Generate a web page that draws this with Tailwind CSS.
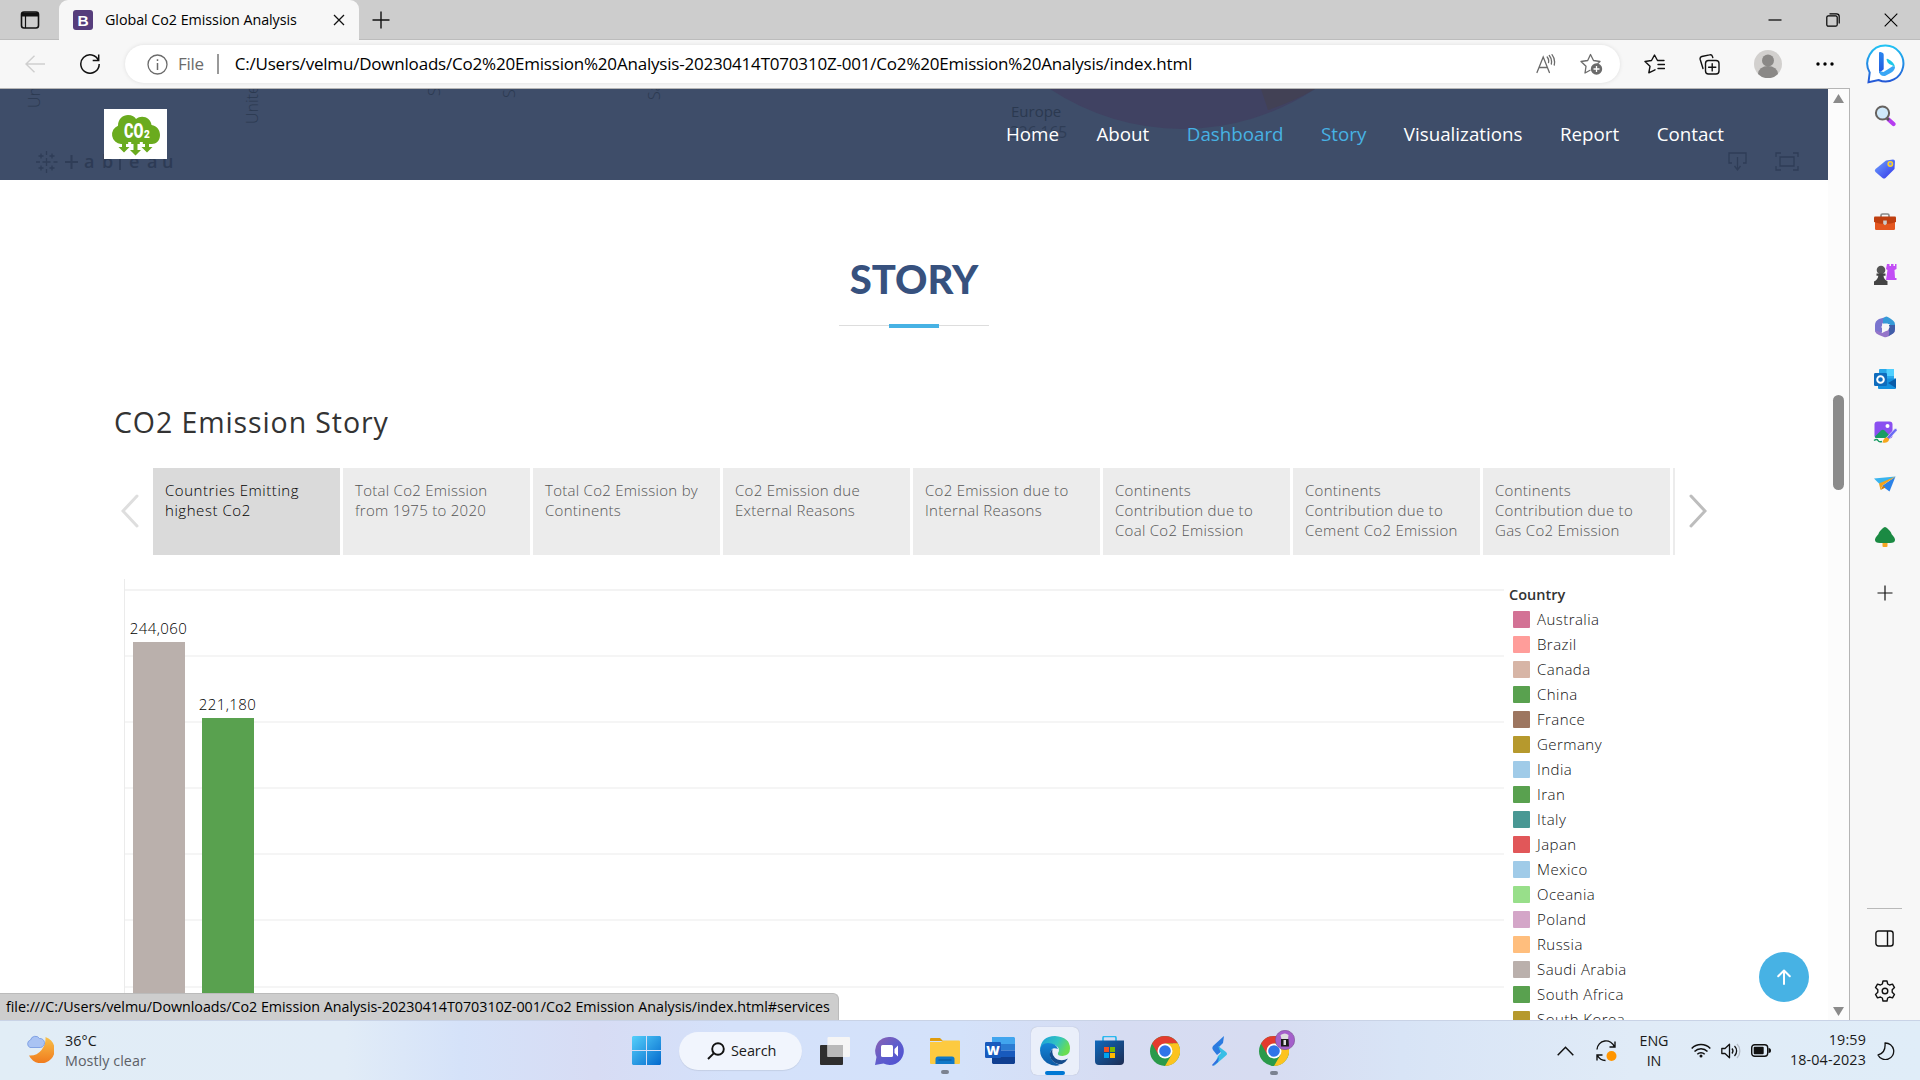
<!DOCTYPE html>
<html lang="en">
<head>
<meta charset="utf-8">
<title>Global Co2 Emission Analysis</title>
<script src="https://cdn.jsdelivr.net/npm/@tailwindcss/browser@4"></script>
</head>
<body class="w-[1920px] h-[1080px] overflow-hidden bg-white flex flex-col font-['Open_Sans',sans-serif] text-black">

<!-- tab strip -->
<header class="h-10 shrink-0 bg-[#cdcdcd] flex items-center border-b border-[#bcbcbc]">
  <div class="w-[59px] h-full flex items-center justify-center">
    <svg class="w-[20px] h-[20px]" viewBox="0 0 20 20" fill="none" stroke="#111" stroke-width="1.6"><rect x="1.5" y="2" width="17" height="16" rx="2.5"/><path d="M2 4.500h16" stroke-width="4"/><path d="M5.500 6v12" stroke-width="1.200"/></svg>
  </div>
  <div class="w-[300px] h-10 -mb-px bg-[#f7f7f7] rounded-t-[9px] flex items-center pl-[14px] pr-[14px] z-10">
    <svg class="w-5 h-5 shrink-0" viewBox="0 0 20 20"><rect width="20" height="20" rx="3" fill="#563d7c"/><text x="4.600" y="15.500" font-family="Liberation Sans" font-weight="700" font-size="15.500" fill="#fff">B</text></svg>
    <span class="ml-3 text-[14.3px] tracking-[-0.04px] whitespace-nowrap">Global Co2 Emission Analysis</span>
    <svg class="w-3 h-3 ml-auto" viewBox="0 0 12 12" stroke="#111" stroke-width="1.300"><path d="M1 1l10 10M11 1L1 11"/></svg>
  </div>
  <svg class="w-[18px] h-[18px] ml-[13px]" viewBox="0 0 18 18" stroke="#111" stroke-width="1.400"><path d="M9 .5v17M.5 9h17"/></svg>
  <div class="ml-auto flex items-center gap-11 pr-[22px]">
    <svg class="w-[14px] h-[14px]" viewBox="0 0 14 14" stroke="#000" stroke-width="1.200"><path d="M.5 7h13"/></svg>
    <svg class="w-[14px] h-[14px]" viewBox="0 0 14 14" fill="none" stroke="#000" stroke-width="1.200"><rect x=".8" y="2.800" width="10.400" height="10.400" rx="1.500"/><path d="M3.500.8h7a2.700 2.700 0 0 1 2.700 2.700v7"/></svg>
    <svg class="w-[14px] h-[14px]" viewBox="0 0 14 14" stroke="#000" stroke-width="1.100"><path d="M.7.700l12.600 12.600M13.300.700L.7 13.300"/></svg>
  </div>
</header>

<!-- toolbar -->
<div class="h-12 shrink-0 bg-[#f7f7f7] flex items-center">
  <svg class="w-5 h-[18px] ml-[25px]" viewBox="0 0 20 18" fill="none" stroke="#cfcfcf" stroke-width="1.400"><path d="M20 9H1M9.500.7L1 9l8.500 8.300"/></svg>
  <svg class="w-5 h-5 ml-[35px]" viewBox="0 0 20 20" fill="none" stroke="#111" stroke-width="1.500"><path d="M18.500 6.500A9.200 9.200 0 1 0 19.200 10M18.700.5v6h-6"/></svg>
  <div class="w-[1495px] h-[38px] ml-[25px] rounded-full bg-white shadow-[0_0_4px_rgba(0,0,0,0.1)] flex items-center pl-[22px] pr-[17px]">
    <svg class="w-[21px] h-[21px]" viewBox="0 0 21 21" fill="none" stroke="#6b6b6b" stroke-width="1.300"><circle cx="10.500" cy="10.500" r="9.500"/><path d="M10.500 9v7M10.500 5.200v1.800" stroke-width="1.500"/></svg>
    <span class="ml-[10px] text-[17px] tracking-[-0.3px] text-[#6b6b6b]">File</span>
    <span class="w-[2px] h-5 bg-[#999] ml-[13px]"></span>
    <span class="ml-4 text-[17px] tracking-[-0.2px] whitespace-nowrap">C:/Users/velmu/Downloads/Co2%20Emission%20Analysis-20230414T070310Z-001/Co2%20Emission%20Analysis/index.html</span>
    <svg class="w-5 h-5 ml-auto" viewBox="0 0 20 20" fill="none" stroke="#6b6b6b" stroke-width="1.300" stroke-linecap="round"><path d="M1 18.500L7.200 3l6.200 15.500M3 13.500h8.400"/><path d="M11.200 3a6.500 6.500 0 0 1 1.300 5.500M13.300 1.500a10 10 0 0 1 2 8.500M16 .7a12 12 0 0 1 2.200 10.300"/></svg>
    <svg class="w-[23px] h-[22px] ml-[24px]" viewBox="0 0 23 22" fill="none" stroke="#6b6b6b" stroke-width="1.300" stroke-linejoin="round"><path d="M10.500 17l-5.500 3 1-6.700L1 8.500l6.700-1L10.500 1.500l3 6 6.500 1-2.500 2.300"/><circle cx="16.500" cy="16" r="5.700" fill="#6b6b6b" stroke="none"/><path d="M16.500 13v6M13.500 16h6" stroke="#fff"/></svg>
  </div>
  <svg class="w-[21px] h-[20px] ml-[24px]" viewBox="0 0 21 20" fill="none" stroke="#111" stroke-width="1.400" stroke-linejoin="round" stroke-linecap="round"><path d="M11 15.800l-6.200 3 1.200-6.500L1 7.500l6.500-1L10.500 1l3 5.500h6.500M14 10.500h6.500M14 14.500h6.500"/></svg>
  <svg class="w-[21px] h-[21px] ml-[34px]" viewBox="0 0 21 21" fill="none" stroke="#111" stroke-width="1.400" stroke-linecap="round"><rect x="6.500" y="6.500" width="13.500" height="13.500" rx="3"/><path d="M13.200 9.700v7.200M9.600 13.300h7.200M4 14.500L1.200 5.500a2.500 2.500 0 0 1 1.600-3L10.500.9a2.500 2.500 0 0 1 3 1.700l.3 1"/></svg>
  <svg class="w-7 h-7 ml-[34px]" viewBox="0 0 28 28"><circle cx="14" cy="14" r="14" fill="#d2d0ce"/><circle cx="14" cy="10.500" r="6" fill="#8a8886"/><path d="M4 24a10 8 0 0 1 20 0 14 14 0 0 1-20 0z" fill="#8a8886"/></svg>
  <svg class="w-[18px] h-1 ml-[34px]" viewBox="0 0 18 4"><circle cx="2" cy="2" r="1.700"/><circle cx="9" cy="2" r="1.700"/><circle cx="16" cy="2" r="1.700"/></svg>
  <svg class="w-[39px] h-[40px] ml-[32px]" viewBox="0 0 39 40"><defs><linearGradient id="bg1" x1="0" y1="0" x2="0" y2="1"><stop offset="0" stop-color="#22c3f3"/><stop offset="1" stop-color="#2457d6"/></linearGradient><linearGradient id="bg2" x1="0" y1="0" x2="0" y2="1"><stop offset="0" stop-color="#2a86f0"/><stop offset="1" stop-color="#2257dd"/></linearGradient></defs><path d="M19.500 1.500a17.800 18 0 1 1-7 34.500l-10 2.200 1.200-9.700A18 18 0 0 1 19.500 1.500z" fill="#fff" stroke="url(#bg1)" stroke-width="2"/><path d="M13 9q0-1.500 1.500-1l2 .8q1.200.5 1.200 2v14.500l-4.700 4z" fill="url(#bg2)"/><path d="M13 27q.5 5.500 6 5l6-3.200q4-2.500 4-5.800l-2-1-5.500 3.500-4 2.500z" fill="#3aa7f5"/><path d="M20.500 15.500q0-1 1.500-.5 6.500 3 7 8.500-.7-1.500-3-2.200-3.500-1-4.500-3z" fill="#1fc8e8"/></svg>
</div>

<!-- page and side panel -->
<div class="h-[932px] shrink-0 flex relative">
  <main class="w-[1828px] h-full overflow-hidden border-t border-[#b5b5b5] flex flex-col">

    <nav class="h-[91px] shrink-0 bg-[#3e4d69] relative flex items-center text-[18.75px] text-white">
      <!-- dashboard faintly visible through the translucent header -->
      <svg class="absolute inset-0 w-[1828px] h-[91px]" viewBox="0 0 1828 91" fill="#2b3950" font-family="Open Sans" font-size="16">
        <path d="M1050 0a240 240 0 0 0 265 0z" fill="#404262"/><path d="M1261 0l7 21a240 240 0 0 0 47-21z" fill="#424155"/>
        <text x="1011" y="28" font-size="15" font-weight="500">Europe</text><text x="1010" y="49" font-size="15.500" fill="#2f3d56">326,165</text>
        <g font-weight="300"><text transform="translate(40 19) rotate(-90)">United</text><text transform="translate(258 35) rotate(-90)">United</text><text transform="translate(440 7) rotate(-90)">S</text><text transform="translate(515 9) rotate(-90)">S</text><text transform="translate(660 11) rotate(-90)">Sa</text></g>
        <g stroke="#2f3d57" stroke-width="1.300" fill="none"><path d="M46.500 69v8M42.500 73h8M41 64.500v5M38.500 67h5M52 64.500v5M49.500 67h5M41 76.500v5M38.500 79h5M52 76.500v5M49.500 79h5M36 73h4M53.500 73h4M46.500 62v4M46.500 80v4"/><path d="M1732 74h-3V64h17v10h-3M1737.500 68v13M1734.500 77l3 4 3-4M1776 68v-4h5M1793 64h5v4M1798 77v4h-5M1781 81h-5v-4M1780 68h14v9h-14z"/><path d="M71.500 66v14M65 73h13M120 65v16" stroke-width="2"/></g>
        <text x="84 102 129 147 162" y="79" font-size="18" font-weight="600" fill="#2d3b55">abeau</text>
      </svg>
      <svg class="relative w-[63px] h-[50px] ml-[104px] mb-[2px]" viewBox="0 0 63 50"><path fill="#fff" d="M0 0h63v50H0z"/><path d="M17 35a9.500 9.500 0 0 1-3-18.300C14 10 19 6 24 6c4 0 7 2 8 4 6-5 15-1 15.500 6C53 17 56 21 56 26c0 6-4 9-8 9z" fill="#6aab1e"/><path d="M18 33h4v5h3.500L20 43.500 14.500 38H18zM29.500 33h4v8H37l-5.500 5.500L26 41h3.500zM41 33h4v5h3.500L43 43.500 37.500 38H41z" fill="#6aab1e"/><path d="M25.700 33v5M37.300 33v5" stroke="#fff" stroke-width="3"/><text transform="translate(20 29) scale(.72 1)" font-family="Roboto" font-weight="900" font-size="20" fill="#fff">CO</text><text x="40" y="29" font-family="Roboto" font-weight="900" font-size="10" fill="#fff">2</text></svg>
      <div class="relative ml-auto mr-[104px] flex gap-[37.5px] font-medium">
        <a>Home</a><a>About</a><a class="text-[#47b2e4]">Dashboard</a><a class="text-[#47b2e4]">Story</a><a>Visualizations</a><a>Report</a><a>Contact</a>
      </div>
    </nav>

    <section class="flex flex-col items-center pt-[75px]">
      <h2 class="text-[40px] leading-[48px] font-black font-['Lato',sans-serif] text-[#37517e]">STORY</h2>
      <div class="mt-[21px] w-[150px] h-1 flex items-start"><span class="flex-1 h-px mt-px bg-[#ddd]"></span><span class="w-[50px] h-1 bg-[#47b2e4]"></span><span class="flex-1 h-px mt-px bg-[#ddd]"></span></div>
    </section>

    <section class="pl-[115px] pt-[74px]">
      <h3 class="-ml-px text-[28.5px] leading-10 font-normal text-[#333] tracking-[0.9px] whitespace-nowrap">CO2 Emission Story</h3>
      <div class="mt-[26px] flex items-center text-[15px] leading-5 font-light text-[#555] tracking-[0.28px] whitespace-nowrap">
        <svg class="w-[18px] h-[34px] ml-[6px] mr-[14px] mb-[2px]" viewBox="0 0 18 34" fill="none" stroke="#dedede" stroke-width="3" stroke-linecap="round"><path d="M16 2L2 17l14 15"/></svg>
        <div class="flex gap-[3px] h-[87px]">
          <div class="w-[187px] bg-[#dadada] text-black tracking-[0.55px] pl-3 pt-3">Countries Emitting<br>highest Co2</div>
          <div class="w-[187px] bg-[#ececec] pl-3 pt-3">Total Co2 Emission<br>from 1975 to 2020</div>
          <div class="w-[187px] bg-[#ececec] pl-3 pt-3">Total Co2 Emission by<br>Continents</div>
          <div class="w-[187px] bg-[#ececec] pl-3 pt-3">Co2 Emission due<br>External Reasons</div>
          <div class="w-[187px] bg-[#ececec] pl-3 pt-3">Co2 Emission due to<br>Internal Reasons</div>
          <div class="w-[187px] bg-[#ececec] pl-3 pt-3">Continents<br>Contribution due to<br>Coal Co2 Emission</div>
          <div class="w-[187px] bg-[#ececec] pl-3 pt-3">Continents<br>Contribution due to<br>Cement Co2 Emission</div>
          <div class="w-[187px] bg-[#ececec] pl-3 pt-3">Continents<br>Contribution due to<br>Gas Co2 Emission</div>
          <div class="w-[2px] bg-[#ececec]"></div>
        </div>
        <svg class="w-[18px] h-[34px] ml-[14px] mb-[2px]" viewBox="0 0 18 34" fill="none" stroke="#bdbdbd" stroke-width="3" stroke-linecap="round"><path d="M2 2l14 15L2 32"/></svg>
      </div>

      <div class="mt-6 ml-[9px] flex h-[460px]">
        <div class="relative w-[1380px] border-l border-[#ebebeb] pt-[9.500px]">
          <div class="h-[66.200px] border-t-2 border-[#f3f3f3]"></div>
          <div class="h-[66.200px] border-t-2 border-[#f5f5f5]"></div>
          <div class="h-[66.200px] border-t-2 border-[#f5f5f5]"></div>
          <div class="h-[66.200px] border-t-2 border-[#f5f5f5]"></div>
          <div class="h-[66.200px] border-t-2 border-[#f5f5f5]"></div>
          <div class="h-[66.200px] border-t-2 border-[#f5f5f5]"></div>
          <div class="h-[66.200px] border-t-2 border-[#f5f5f5]"></div>
          <div class="absolute inset-0 flex items-end gap-2 pl-[3px] text-[15px] leading-6 tracking-[0.45px] text-black font-normal">
            <div class="w-[61px] flex flex-col items-center"><span class="font-light">244,060</span><span class="w-[52px] mt-[2px] bg-[#bab0ac]" style="height:397.5px"></span></div>
            <div class="w-[61px] flex flex-col items-center"><span class="font-light">221,180</span><span class="w-[52px] mt-[2px] bg-[#59a14f]" style="height:321.5px"></span></div>
          </div>
        </div>
        <div class="pl-[5px] pt-[3px] text-[15px] text-[#111] font-light tracking-[0.45px] whitespace-nowrap">
          <div class="h-[25px] leading-[25px] font-semibold text-[14.500px] text-[#333] tracking-normal">Country</div>
          <ul class="pl-1 leading-[25px] [&_li]:flex [&_li]:items-center [&_li]:gap-[7px] [&_i]:w-[17px] [&_i]:h-[17px] [&_i]:rounded-[1px]">
            <li><i class="bg-[#d37295]"></i>Australia</li>
            <li><i class="bg-[#ff9d9a]"></i>Brazil</li>
            <li><i class="bg-[#d7b5a6]"></i>Canada</li>
            <li><i class="bg-[#59a14f]"></i>China</li>
            <li><i class="bg-[#9d7660]"></i>France</li>
            <li><i class="bg-[#b6992d]"></i>Germany</li>
            <li><i class="bg-[#a0cbe8]"></i>India</li>
            <li><i class="bg-[#59a14f]"></i>Iran</li>
            <li><i class="bg-[#499894]"></i>Italy</li>
            <li><i class="bg-[#e15759]"></i>Japan</li>
            <li><i class="bg-[#a0cbe8]"></i>Mexico</li>
            <li><i class="bg-[#98df8a]"></i>Oceania</li>
            <li><i class="bg-[#d4a6c8]"></i>Poland</li>
            <li><i class="bg-[#ffbe7d]"></i>Russia</li>
            <li><i class="bg-[#bab0ac]"></i>Saudi Arabia</li>
            <li><i class="bg-[#59a14f]"></i>South Africa</li>
            <li><i class="bg-[#b6992d]"></i>South Korea</li>
          </ul>
        </div>
      </div>
    </section>
  </main>

  <!-- back to top -->
  <div class="absolute left-[1759px] top-[864px] w-[50px] h-[50px] rounded-full bg-[#47b2e4] flex items-center justify-center">
    <svg class="w-[14px] h-4" viewBox="0 0 14 16" fill="none" stroke="#fff" stroke-width="2" stroke-linecap="round" stroke-linejoin="round"><path d="M7 15V1.500M1.200 7.200L7 1.500l5.800 5.700"/></svg>
  </div>

  <!-- link status -->
  <div class="absolute left-0 bottom-0 w-[839px] h-[27px] bg-[#cdcdcd] border-t border-r border-[#bbb] rounded-tr-md pl-[6px] flex items-center text-[14.300px] tracking-[-0.03px] whitespace-nowrap">file:///C:/Users/velmu/Downloads/Co2 Emission Analysis-20230414T070310Z-001/Co2 Emission Analysis/index.html#services</div>

  <!-- scrollbar -->
  <div class="w-[22px] bg-[#fcfcfc] border-t border-r border-[#b5b5b5] flex flex-col items-center pt-[5px] pb-[4px]">
    <svg class="w-[11px] h-[9px]" viewBox="0 0 11 9"><path d="M5.500 0L11 9H0z" fill="#8b8b8b"/></svg>
    <div class="mt-[292px] w-[11px] h-[95px] rounded-full bg-[#8b8b8b]"></div>
    <svg class="w-[11px] h-[9px] mt-auto" viewBox="0 0 11 9"><path d="M5.500 9L11 0H0z" fill="#8b8b8b"/></svg>
  </div>

  <!-- side panel -->
  <aside class="w-[70px] bg-[#f7f7f7] flex flex-col items-center pt-[2px] pr-px [&>div]:h-[52.600px] [&>div]:flex [&>div]:items-center [&_svg]:block">
    <div><svg class="w-[22px] h-[22px]" viewBox="0 0 22 22"><path d="M14.500 14.500l5 4.500" stroke="#b63df0" stroke-width="4.200" stroke-linecap="round"/><path d="M12 12.500l3 2.500" stroke="#555" stroke-width="2.500"/><circle cx="8.500" cy="8" r="6.600" fill="#cfe9fb" stroke="#66625f" stroke-width="2"/></svg></div>
    <div><svg class="w-[22px] h-[22px]" viewBox="0 0 22 22"><defs><linearGradient id="tg" x1="0" y1="0" x2="1" y2="1"><stop offset="0" stop-color="#6ea4ff"/><stop offset="1" stop-color="#3434e8"/></linearGradient></defs><path d="M12 2.500L19 1.500Q21 1.500 21 3.500L20.500 11l-9 9q-1.500 1-3 0L1.500 14q-1.500-1.500 0-3z" fill="url(#tg)"/><circle cx="16.300" cy="6" r="2.200" fill="#6f8fff" stroke="#ffd21f" stroke-width="1.500"/></svg></div>
    <div><svg class="w-[24px] h-[20px] mt-[2px]" viewBox="0 0 24 20"><path d="M8 5V3.500Q8 2 9.500 2h5Q16 2 16 3.500V5" fill="none" stroke="#888" stroke-width="1.700"/><rect x="2" y="9" width="20" height="9" rx="1.200" fill="#e4561f"/><path d="M1 5.500Q1 4.500 2 4.500h20q1 0 1 1V10q-5 2-11 2T1 10z" fill="#bf3f10"/><path d="M10.200 8.500h3.600v3.300l-1.800 1.500-1.800-1.500z" fill="#ccc"/></svg></div>
    <div><svg class="w-[24px] h-[24px]" viewBox="0 0 24 24"><path d="M14 2h2.500v2H18V2h2.500v2H22V2h1.500v5L21.500 8l.5 8h1.500v2H13l1.500-10L13 7z" fill="#c24df5"/><circle cx="8" cy="8" r="4.300" fill="#555"/><path d="M3.500 11.500h9v2.200h-2q.3 3.800 4 5.500V23H1v-3.500q4-2 4.300-5.800H3.500z" fill="#444"/></svg></div>
    <div><svg class="w-[22px] h-[22px]" viewBox="0 0 22 22"><path d="M12 1L5 3Q1 5 1 9v5q0 3 3 4l4-1.500V9q0-2 2-3z" fill="#7a75cf"/><path d="M9 2.500L12 .5q2 0 7 4 2 1.500 2 4V13l-6-5H9z" fill="#369bd8"/><path d="M1 14q1 4 4 5l5 2q2 .7 4-.5l5-3q2-1.500 2-4V10l-6 1-1 3-6 3z" fill="#9575c9"/><path d="M21 9v4q0 3-2 4.500L14 20.500q2-2 1-6V9z" fill="#405ea8"/><path d="M9.300 7.500h4.400l2 3.500-2 3.500H9.300l-2-3.500z" fill="#f7f7f7"/></svg></div>
    <div><svg class="w-[22px] h-[22px]" viewBox="0 0 22 22"><rect x="5" y="1" width="15" height="14" rx="1" fill="#28a8ea"/><path d="M12.500 1H20v7h-7.500z" fill="#50d0ff"/><path d="M4 10.500h18V20q0 1-1 1H5q-1 0-1-1z" fill="#1490df"/><path d="M22 10.500V20l-8-5z" fill="#0a5ba8"/><rect x="0" y="5" width="13" height="13" rx="1.200" fill="#0f6cbd"/><circle cx="6.500" cy="11.500" r="3.300" fill="none" stroke="#fff" stroke-width="2"/></svg></div>
    <div><svg class="w-[24px] h-[24px]" viewBox="0 0 24 24"><rect x="1.500" y="1.500" width="18" height="17" rx="3" fill="#8a4ff0"/><circle cx="14.500" cy="6" r="2" fill="#fff"/><path d="M2 16.500l6-6q1.800-1.500 3.600 0L18 17q-1 1.500-3 1.500H5q-3 0-3-2z" fill="#179c63"/><path d="M1 18h13v6H1z" fill="#f7f7f7"/><path d="M13 18L22 8.500q2.500-.5 2 2L15.500 20z" fill="#6a6af5" stroke="#f7f7f7" stroke-width=".6"/><path d="M9.500 22.500q1.500-5.500 4.500-5 3 1 1.500 3.500-1.500 2.500-6 1.500z" fill="#f6a71c"/><path d="M1 20.500q3-2 4 0t4 1" fill="none" stroke="#179c63" stroke-width="1.500"/></svg></div>
    <div><svg class="w-[22px] h-[18px]" viewBox="0 0 22 18"><path d="M0 3.500L21.500 1.500 6.500 10z" fill="#39b4ee"/><path d="M21.500 1.500L15.500 16.500 8 11z" fill="#2b82e8"/><path d="M21.500 1.500L5 8.500 6.500 15l2-4.500z" fill="#f3a31c"/><path d="M6.500 15L9 10.800l2.500 1.700z" fill="#c97b0c"/></svg></div>
    <div><svg class="w-[22px] h-[22px]" viewBox="0 0 22 22"><rect x="8.500" y="15" width="5" height="6" rx="1" fill="#f5a623"/><path d="M11 1q1.200 0 2.500 1.500 4 3.500 4 5.500 3.800 4 3.500 6 0 3-5 3H6q-5 0-5-3-.3-2 3.500-6 0-2 4-5.500Q9.800 1 11 1z" fill="#1b8a43"/></svg></div>
    <svg class="w-4 h-4 mt-[22px]" viewBox="0 0 16 16" stroke="#111" stroke-width="1.200"><path d="M8 .5v15M.5 8h15"/></svg>
    <span class="w-[35px] h-px bg-[#b9b9b9] mt-auto"></span>
    <svg class="w-[19px] h-[17px] mt-[21px]" viewBox="0 0 19 17" fill="none" stroke="#111" stroke-width="1.400"><rect x=".9" y="1" width="17.200" height="15" rx="2.500"/><path d="M12.500 1v15"/></svg>
    <svg class="w-[22px] h-[22px] mt-[33px] mb-[18px]" viewBox="0 0 22 22" fill="none" stroke="#111" stroke-width="1.400" stroke-linejoin="round"><circle cx="11" cy="11" r="2.800"/><path d="M9 1h4l.7 3 1.800 1 3-.9 2 3.500-2.300 2.200v2.400l2.300 2.200-2 3.500-3-.9-1.800 1L13 21H9l-.7-3-1.800-1-3 .9-2-3.500 2.300-2.200V9.800L1.500 7.600l2-3.500 3 .9 1.800-1z"/></svg>
  </aside>
</div>

<!-- taskbar -->
<footer class="h-[60px] shrink-0 border-t border-[#c9d3e6] bg-[linear-gradient(90deg,#e1edf6_0%,#e1ecf7_18%,#d5e2f9_24%,#d7dcf4_31%,#d4e1fa_38%,#d4e2fa_50%,#d6dcf2_58%,#d7dcf1_66%,#d8e4f6_73%,#e0ebf7_85%,#e0edf8_100%)] flex items-center text-[#1a1a1a]">
  <div class="w-[632px] pl-[26px] flex items-center gap-[11px]">
    <svg class="w-7 h-7 mb-[3px]" viewBox="0 0 28 28"><defs><linearGradient id="mn" x1="0" y1="0" x2="0" y2="1"><stop offset="0" stop-color="#f8c14a"/><stop offset="1" stop-color="#f07b1d"/></linearGradient></defs><path d="M19.500 2A13.500 13.500 0 1 1 3 20.500Q11 21 15.500 15T19.500 2z" fill="url(#mn)"/><path d="M4 12.500a4 4 0 0 1 .5-7.500 5 5 0 0 1 9-1.500 4.500 4.500 0 0 1 1 9z" fill="#a9c3f3" stroke="#7195e0" stroke-width=".8"/></svg>
    <div class="text-[14.300px] leading-5 tracking-[0.06px]"><div>36°C</div><div class="text-[#5c6066]">Mostly clear</div></div>
  </div>
  <svg class="w-[29px] h-[29px]" viewBox="0 0 29 29"><defs><linearGradient id="wn" x1="0" y1="0" x2="1" y2="1"><stop offset="0" stop-color="#55d0fb"/><stop offset="1" stop-color="#0369cd"/></linearGradient></defs><path d="M1 0h13v14H0V1zM15 0h13l1 1v13H15zM0 15h14v14H1l-1-1zM15 15h14v13l-1 1H15z" fill="url(#wn)"/></svg>
  <div class="ml-[18px] w-[123px] h-[38px] rounded-full bg-[#f1f5fd] shadow-[0_1px_1px_rgba(0,0,0,0.08)] flex items-center pl-[28px]">
    <svg class="w-[18px] h-[18px]" viewBox="0 0 18 18" fill="none" stroke="#111" stroke-width="1.900"><circle cx="11" cy="7" r="5.800"/><path d="M6.700 11.300L1 17"/></svg>
    <span class="ml-[6px] text-[14.500px] tracking-[-0.1px]">Search</span>
  </div>
  <svg class="w-[30px] h-[28px] ml-[18px]" viewBox="0 0 30 28"><rect y="8" width="23" height="20" rx="1" fill="#2e2e2e"/><rect x="7.500" width="22.500" height="20" rx="1" fill="#f5f5f5"/><path d="M7.500 8H23v12H7.500z" fill="#b9b9b9"/></svg>
  <svg class="w-[29px] h-[28px] ml-[25px]" viewBox="0 0 29 28"><defs><linearGradient id="ch" x1="0" y1="0" x2="1" y2="1"><stop offset="0" stop-color="#8e62b0"/><stop offset=".5" stop-color="#5f5dcc"/><stop offset="1" stop-color="#4c50d4"/></linearGradient></defs><path d="M14.500 0a14 14 0 1 1-6 26.500L0 28l1.500-8A14 14 0 0 1 14.500 0z" fill="url(#ch)"/><rect x="6" y="8" width="12" height="12" rx="1.500" fill="#fff"/><path d="M19.500 12l3.500-3.500v11L19.500 16z" fill="#fff"/></svg>
  <div class="ml-[26px] relative"><svg class="w-[30px] h-[27px]" viewBox="0 0 30 27"><path d="M0 2Q0 1 1 1h9l3 3H0z" fill="#e09c0d"/><path d="M0 5h11l2-1.500h16q1 0 1 1V26q0 1-1 1H1q-1 0-1-1z" fill="#fdca40"/><path d="M5.500 27v-5q0-2.500 2.500-2.500h14q2.500 0 2.500 2.500v5z" fill="#0f78c8"/><path d="M8.500 23h13" stroke="#0a5290"/></svg><span class="absolute left-[11px] top-[33px] w-2 h-1 rounded-full bg-[#7b8290]"></span></div>
  <svg class="w-[30px] h-[27px] ml-[25px]" viewBox="0 0 30 27"><path d="M7 0h22l1 1v6H7z" fill="#41a5ee"/><path d="M7 7h23v6.500H7z" fill="#2b7cd3"/><path d="M7 13.500h23V20H7z" fill="#185abd"/><path d="M7 20h23v6l-1 1H8l-1-1z" fill="#103f91"/><rect y="5" width="16" height="16" rx="1.200" fill="#185abd"/><text x="1.300" y="17.500" font-family="Open Sans" font-size="13" font-weight="800" fill="#fff">W</text></svg>
  <div class="ml-4 w-12 h-12 rounded-md bg-[#eaeffa] relative flex items-center justify-center shadow-[0_0_1px_rgba(0,0,0,0.25)]">
    <svg class="w-[30px] h-[30px]" viewBox="0 0 30 30"><defs><linearGradient id="e1" x1="0" y1="0" x2="1" y2=".4"><stop offset="0" stop-color="#1a9ddc"/><stop offset=".6" stop-color="#31c4c0"/><stop offset="1" stop-color="#69dd52"/></linearGradient><linearGradient id="e2" x1="0" y1="0" x2="0" y2="1"><stop offset="0" stop-color="#1486d8"/><stop offset="1" stop-color="#0c59a4"/></linearGradient></defs><path d="M0 14Q1 0 15 0q15 1 15 12.500 0 7-7.500 7.500-5.500 0-4.500-3 3-5-3-8Q5 6 0 14z" fill="url(#e1)"/><path d="M0 14Q1 7 8 7q8 0 10 6-7-3-8 5 0 8 10 11Q14 31 7 27 0 22 0 14z" fill="url(#e2)"/><path d="M12.500 13Q8 17 11 23q4 6 11 5 4-2 6-5.500-5 3-10.500 1Q11 20 12.500 13z" fill="#144c8c"/></svg>
    <span class="absolute left-[14px] bottom-0 w-5 h-1 rounded-full bg-[#0078d4]"></span>
  </div>
  <svg class="w-[29px] h-[29px] ml-4" viewBox="0 0 29 29"><defs><linearGradient id="st" x1="0" y1="0" x2="1" y2="1"><stop offset="0" stop-color="#0f69bd"/><stop offset="1" stop-color="#1d2c52"/></linearGradient></defs><path d="M8 5V2q0-1.500 1.500-1.500h10Q21 .5 21 2v3" fill="none" stroke="#2cb8ee" stroke-width="1.700"/><path d="M0 4.500h29V25q0 4-4 4H4q-4 0-4-4z" fill="url(#st)"/><path d="M9 11h5v5H9z" fill="#f25022"/><path d="M15 11h5v5h-5z" fill="#7fba00"/><path d="M9 17h5v5H9z" fill="#00a4ef"/><path d="M15 17h5v5h-5z" fill="#ffb900"/></svg>
  <svg class="w-[30px] h-[30px] ml-[26px]" viewBox="0 0 30 30"><g id="chrome"><circle cx="15" cy="15" r="15" fill="#2a9a4a"/><path d="M15 0a15 15 0 0 1 13 7.500H15L8.500 18.700 2 7.500A15 15 0 0 1 15 0z" fill="#e33b2e"/><path d="M28 7.500A15 15 0 0 1 15 30l6.500-11.300L23 7.500z" fill="#fcc31e"/><path d="M15 7.500h13l-5 6z" fill="#fcc31e"/><circle cx="15" cy="15" r="7.500" fill="#fff"/><circle cx="15" cy="15" r="5.800" fill="#2f74e8"/></g></svg>
  <svg class="w-[18px] h-[30px] ml-[30px]" viewBox="0 0 18 30"><path d="M14 0L3 10q-1.500 2 0 4l4 5 5-4-3-4 4-4z" fill="#2b7be0"/><path d="M8 10l8 6q2 2 0 3.500L4 30l4-10 3-3z" fill="#37bfe6"/><path d="M3 30l5-4 1-5-7 8z" fill="#2f6fe0"/></svg>
  <div class="ml-[31px] relative"><svg class="w-[30px] h-[30px]" viewBox="0 0 30 30"><use href="#chrome"/></svg>
    <svg class="absolute left-[16px] -top-[6px] w-5 h-5" viewBox="0 0 20 20"><circle cx="10" cy="10" r="9.700" fill="#a45fcb" stroke="#75508c" stroke-width=".6"/><path d="M5.500 5q4.500-3 8 0l-.5 4H6.500z" fill="#ddd"/><path d="M6 9h7.500l.5 7.500H6z" fill="#1b1b1b"/><path d="M8.500 10h2.500v5H8.500z" fill="#ddd"/></svg>
    <span class="absolute left-[11px] top-[35px] w-2 h-1 rounded-full bg-[#7b8290]"></span></div>

  <div class="ml-auto flex items-center pr-[25px]">
    <svg class="w-[17px] h-[10px]" viewBox="0 0 17 10" fill="none" stroke="#111" stroke-width="1.500"><path d="M.7 9.200L8.500 1.200l7.800 8"/></svg>
    <svg class="w-[22px] h-[22px] ml-[21px]" viewBox="0 0 22 22" fill="none" stroke="#111" stroke-width="1.400"><path d="M2 9.500A9 9 0 0 1 19.500 7M20 1.500V7h-5.500M2 20.500V15h5.500M2.500 15.500Q5 20.500 10.500 20.500"/><circle cx="16.500" cy="16" r="5" fill="#ff9500" stroke="none"/></svg>
    <div class="ml-[19px] w-[36px] text-center text-[14.300px] leading-5 tracking-[-0.1px]">ENG<br>IN</div>
    <svg class="w-5 h-[15px] ml-[19px]" viewBox="0 0 20 15" fill="none" stroke="#111" stroke-width="1.500"><path d="M.7 5.500a13 13 0 0 1 18.600 0M3.500 8.500a9 9 0 0 1 13 0M6.300 11.300a5.200 5.200 0 0 1 7.400 0"/><circle cx="10" cy="13" r="1.500" fill="#111" stroke="none"/></svg>
    <svg class="w-5 h-4 ml-[10px]" viewBox="0 0 20 16" fill="none" stroke="#111" stroke-width="1.300" stroke-linejoin="round"><path d="M.8 5.500H4L8.500 1.200v13.600L4 10.500H.8z"/><path d="M11 5.500a4 4 0 0 1 0 5M13.500 3a7 7 0 0 1 0 10"/><path d="M16 1a10 10 0 0 1 0 14" stroke="#b5bcc6"/></svg>
    <svg class="w-5 h-[13px] ml-[10px]" viewBox="0 0 20 13"><rect x=".7" y=".7" width="16" height="11.600" rx="3" fill="none" stroke="#111" stroke-width="1.400"/><rect x="2.700" y="2.700" width="10" height="7.600" rx="1" fill="#111"/><path d="M17.500 4q2.500 0 2.500 2.500T17.500 9z" fill="#111"/></svg>
    <div class="ml-[18px] w-[77px] mb-[2px] text-right text-[14.300px] leading-5 tracking-[0.15px] whitespace-nowrap">19:59<br>18-04-2023</div>
    <svg class="w-[18px] h-[18px] ml-[11px]" viewBox="0 0 18 18" fill="none" stroke="#111" stroke-width="1.300" stroke-linejoin="round"><path d="M8 1a8.300 8.300 0 1 1-7 12Q9 11 8 1z"/></svg>
  </div>
</footer>
</body>
</html>
